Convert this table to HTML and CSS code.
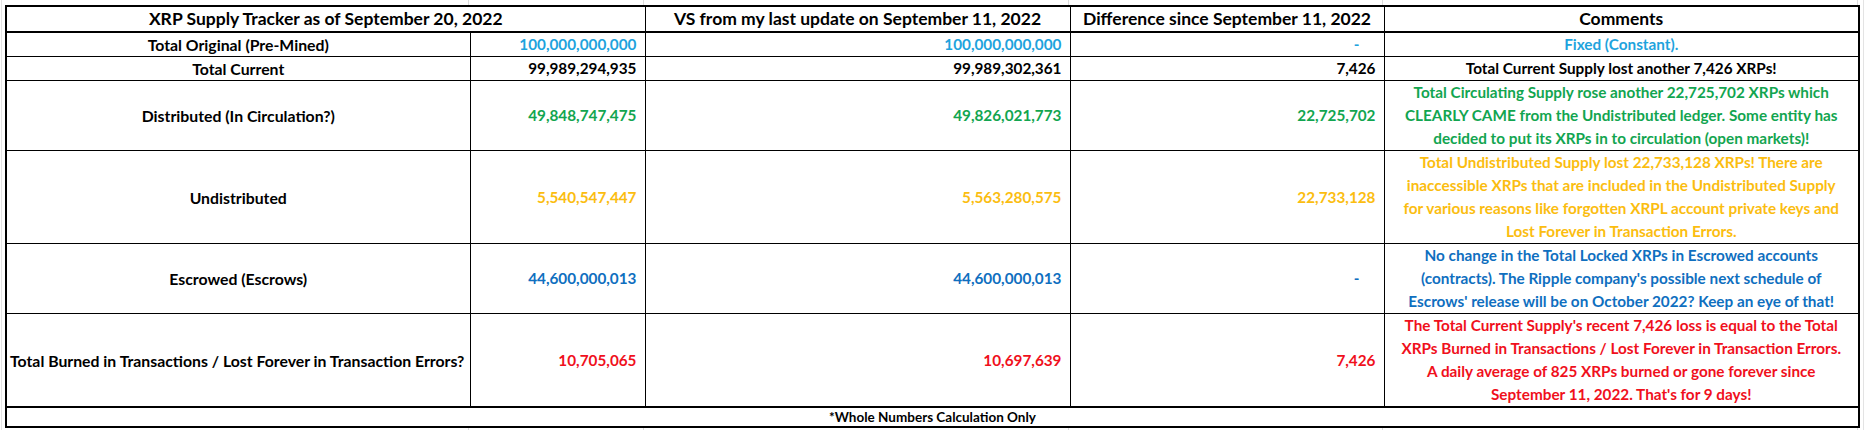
FILE: index.html
```html
<!DOCTYPE html>
<html lang="en">
<head>
<meta charset="utf-8">
<title>XRP Supply Tracker</title>
<link rel="stylesheet" href="styles.css">
</head>
<body>
<div class="sheet">
  <div class="strip strip-top">
    <div class="g g1"></div><div class="g g2"></div><div class="g g3"></div><div class="g g4"></div><div class="g g5"></div>
  </div>
  <table class="tracker">
    <colgroup>
      <col class="c1"><col class="c2"><col class="c3"><col class="c4"><col class="c5">
    </colgroup>
    <tr class="r-head">
      <th colspan="2">XRP Supply Tracker as of September 20, 2022</th>
      <th>VS from my last update on September 11, 2022</th>
      <th>Difference since September 11, 2022</th>
      <th>Comments</th>
    </tr>
    <tr class="r-1">
      <td class="label">Total Original (Pre-Mined)</td>
      <td class="num lblue">100,000,000,000</td>
      <td class="num lblue">100,000,000,000</td>
      <td class="num dash lblue">-</td>
      <td class="note lblue">Fixed (Constant).</td>
    </tr>
    <tr class="r-1">
      <td class="label">Total Current</td>
      <td class="num">99,989,294,935</td>
      <td class="num">99,989,302,361</td>
      <td class="num">7,426</td>
      <td class="note">Total Current Supply lost another 7,426 XRPs!</td>
    </tr>
    <tr class="r-3">
      <td class="label">Distributed (In Circulation?)</td>
      <td class="num green">49,848,747,475</td>
      <td class="num green">49,826,021,773</td>
      <td class="num green">22,725,702</td>
      <td class="note green"><span>Total Circulating Supply rose another 22,725,702 XRPs which</span><span>CLEARLY CAME from the Undistributed ledger. Some entity has</span><span>decided to put its XRPs in to circulation (open markets)!</span></td>
    </tr>
    <tr class="r-4">
      <td class="label">Undistributed</td>
      <td class="num gold">5,540,547,447</td>
      <td class="num gold">5,563,280,575</td>
      <td class="num gold">22,733,128</td>
      <td class="note gold"><span>Total Undistributed Supply lost 22,733,128 XRPs! There are</span><span>inaccessible XRPs that are included in the Undistributed Supply</span><span>for various reasons like forgotten XRPL account private keys and</span><span>Lost Forever in Transaction Errors.</span></td>
    </tr>
    <tr class="r-3">
      <td class="label">Escrowed (Escrows)</td>
      <td class="num blue">44,600,000,013</td>
      <td class="num blue">44,600,000,013</td>
      <td class="num dash blue">-</td>
      <td class="note blue"><span>No change in the Total Locked XRPs in Escrowed accounts</span><span>(contracts). The Ripple company's possible next schedule of</span><span>Escrows' release will be on October 2022? Keep an eye of that!</span></td>
    </tr>
    <tr class="r-burn">
      <td class="label label-left">Total Burned in Transactions / Lost Forever in Transaction Errors?</td>
      <td class="num red">10,705,065</td>
      <td class="num red">10,697,639</td>
      <td class="num red">7,426</td>
      <td class="note red"><span>The Total Current Supply's recent 7,426 loss is equal to the Total</span><span>XRPs Burned in Transactions / Lost Forever in Transaction Errors.</span><span>A daily average of 825 XRPs burned or gone forever since</span><span>September 11, 2022. That's for 9 days!</span></td>
    </tr>
    <tr class="r-foot">
      <td colspan="5" class="foot">*Whole Numbers Calculation Only</td>
    </tr>
  </table>
  <div class="strip strip-bottom">
    <div class="g g1"></div><div class="g g2"></div><div class="g g3"></div><div class="g g4"></div><div class="g g5"></div>
  </div>
</div>
</body>
</html>
```
FILE: styles.css
```css
html, body {
  margin: 0;
  padding: 0;
  background: #ffffff;
}

body {
  font-family: "Lato", "Liberation Sans", sans-serif;
  font-weight: 700;
  color: #000000;
}

.sheet {
  width: 1865px;
  height: 430px;
  overflow: hidden;
  background: linear-gradient(to right, transparent 1px, #e3e3e3 1px, #e3e3e3 2px, transparent 2px),
              linear-gradient(to left, transparent 1px, #e3e3e3 1px, #e3e3e3 2px, transparent 2px);
}

.strip {
  display: flex;
  margin-left: 5px;
}

.strip-top { height: 5px; }
.strip-bottom { height: 10px; }

.g {
  box-sizing: border-box;
  border-right: 1px solid #dcdcdc;
}
.g1 { width: 464px; }
.g2 { width: 175px; }
.g3 { width: 425px; }
.g4 { width: 314px; }
.g5 { width: 475px; }

.tracker {
  margin-left: 5px;
  border-collapse: collapse;
  table-layout: fixed;
  width: 1853px;
  border: 2px solid #000;
  font-size: 15.5px;
  background: #ffffff;
}

.c1 { width: 464px; }
.c2 { width: 175px; }
.c3 { width: 425px; }
.c4 { width: 314px; }
.c5 { width: 475px; }

.tracker th,
.tracker td {
  border: 1px solid #000;
  padding: 0 3px;
  vertical-align: middle;
  white-space: nowrap;
  overflow: hidden;
  line-height: 23px;
}

.tracker th {
  font-size: 17.5px;
  font-weight: 700;
  text-align: center;
  border-bottom: 2px solid #000;
  height: 24px;
  line-height: 24px;
}

.r-1 td { height: 22px; }
.r-3 td { height: 68px; }
.r-4 td { height: 91px; }
.r-burn td { height: 92px; border-bottom: 2px solid #000; }
.r-foot td { height: 18px; line-height: 18px; font-size: 13.5px; }

.label { text-align: center; font-size: 15.8px; }
.label-left { text-align: left; padding-left: 3px; }
.tracker td.num { text-align: right; font-size: 15.3px; padding-right: 8px; }
.tracker td.dash { padding-right: 24px; }
.note { text-align: center; font-size: 15.3px; }
.note span { display: block; }
.foot { text-align: center; border-bottom: 2px solid #000; }

.lblue { color: #1ea3dd; }
.green { color: #12a550; }
.gold { color: #fbbd10; }
.blue { color: #0f6fbf; }
.red { color: #f0101c; }
```
